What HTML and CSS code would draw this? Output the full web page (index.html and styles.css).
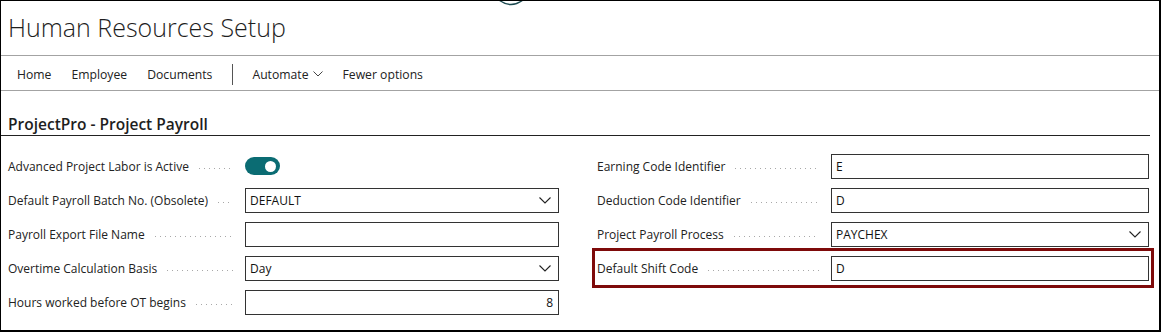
FILE: index.html
```html
<!DOCTYPE html>
<html>
<head>
<meta charset="utf-8">
<link rel="stylesheet" href="styles.css">
</head>
<body>
<div class="frame">
  <svg class="topdeco" width="30" height="8" viewBox="0 0 30 8"><path d="M3 0 Q15 9 27 0" fill="none" stroke="#1c4a50" stroke-width="1.4"/></svg>
  <header class="titlebar"><h1 class="title">Human Resources Setup</h1></header>
  <nav class="actions">
    <span class="act">Home</span>
    <span class="act">Employee</span>
    <span class="act">Documents</span>
    <span class="sep"></span>
    <span class="act">Automate <svg class="navchev" width="10" height="6" viewBox="0 0 10 6"><path d="M0.5 0.5 L5 5 L9.5 0.5" fill="none" stroke="#444" stroke-width="1"/></svg></span>
    <span class="act">Fewer options</span>
  </nav>
  <section class="group">
    <h2 class="group-title">ProjectPro - Project Payroll</h2>
    <div class="cols">
      <div class="col left">
        <div class="row"><span class="label">Advanced Project Labor is Active</span><span class="lead"></span><div class="ctl"><span class="toggle"><span class="knob"></span></span></div></div>
        <div class="row"><span class="label">Default Payroll Batch No. (Obsolete)</span><span class="lead"></span><div class="ctl"><div class="field sel"><span class="val">DEFAULT</span><svg class="chev" width="12" height="7" viewBox="0 0 12 7"><path d="M0.5 0.5 L6 6 L11.5 0.5" fill="none" stroke="#222" stroke-width="1.1"/></svg></div></div></div>
        <div class="row"><span class="label">Payroll Export File Name</span><span class="lead"></span><div class="ctl"><div class="field"></div></div></div>
        <div class="row"><span class="label">Overtime Calculation Basis</span><span class="lead"></span><div class="ctl"><div class="field sel"><span class="val plain">Day</span><svg class="chev" width="12" height="7" viewBox="0 0 12 7"><path d="M0.5 0.5 L6 6 L11.5 0.5" fill="none" stroke="#222" stroke-width="1.1"/></svg></div></div></div>
        <div class="row"><span class="label">Hours worked before OT begins</span><span class="lead"></span><div class="ctl"><div class="field num"><span class="val plain">8</span></div></div></div>
      </div>
      <div class="col right">
        <div class="row"><span class="label">Earning Code Identifier</span><span class="lead"></span><div class="ctl"><div class="field"><span class="val">E</span></div></div></div>
        <div class="row"><span class="label">Deduction Code Identifier</span><span class="lead"></span><div class="ctl"><div class="field"><span class="val">D</span></div></div></div>
        <div class="row"><span class="label">Project Payroll Process</span><span class="lead"></span><div class="ctl"><div class="field sel"><span class="val">PAYCHEX</span><svg class="chev" width="12" height="7" viewBox="0 0 12 7"><path d="M0.5 0.5 L6 6 L11.5 0.5" fill="none" stroke="#222" stroke-width="1.1"/></svg></div></div></div>
        <div class="row hl"><span class="label">Default Shift Code</span><span class="lead"></span><div class="ctl"><div class="field"><span class="val">D</span></div></div></div>
      </div>
    </div>
  </section>
</div>
</body>
</html>
```
FILE: styles.css
```css
* { box-sizing: border-box; }
html, body { margin: 0; padding: 0; background: #fff; }
body { font-family: "Open Sans", "Noto Sans", sans-serif; color: #212121; }
.frame {
  position: relative;
  width: 1161px;
  height: 332px;
  border: 1px solid #000;
  border-right-width: 2px;
  border-bottom-width: 2px;
  overflow: hidden;
}
.topdeco { position: absolute; left: 495px; top: -1px; }
.titlebar {
  height: 55px;
  border-bottom: 1px solid #a3a3a3;
  padding-left: 7px;
  display: flex;
  align-items: center;
}
.title {
  margin: 0;
  font-weight: 300;
  font-size: 25px;
  color: #1e1e1e;
  position: relative;
  top: -1px;
}
.actions {
  height: 35px;
  border-bottom: 1px solid #a3a3a3;
  display: flex;
  align-items: center;
  padding-left: 16px;
  padding-top: 2px;
  font-size: 12.2px;
  color: #222;
}
.act { margin-right: 20px; display: inline-flex; align-items: center; }
.navchev { margin-left: 4px; }
.sep { width: 1px; height: 21px; background: #555; margin: 0 19px 0 0; }
.group { padding: 0 9px 0 0; }
.group-title {
  margin: 0;
  font-size: 15.5px;
  font-weight: 600;
  color: #1e1e1e;
  height: 45px;
  padding: 24px 0 0 7px;
  line-height: 18px;
  border-bottom: 1px solid #222;
}
.cols { display: flex; padding-top: 13px; }
.col { display: flex; flex-direction: column; }
.col.left { width: 558px; padding-left: 7px; }
.col.right { width: 552px; margin-left: 38px; }
.row {
  display: flex;
  align-items: center;
  height: 34px;
  font-size: 12px;
  color: #222;
}
.label { white-space: nowrap; }
.lead {
  flex: 1;
  align-self: center;
  height: 1px;
  margin: 5px 12px 0 10px;
  background-image: linear-gradient(to right, #a8a8a8 1px, transparent 1px);
  background-size: 5px 1px;
  background-repeat: repeat-x;
}
.col.left .ctl { width: 314px; }
.col.right .ctl { width: 318px; }
.field {
  height: 25px;
  border: 1px solid #333;
  display: flex;
  align-items: center;
  padding: 0 6px 0 4px;
  font-size: 12px;
  color: #111;
}
.field.sel { justify-content: space-between; padding-right: 7px; }
.field.num { justify-content: flex-end; padding-right: 5px; }
.toggle {
  display: block;
  width: 35px;
  height: 18px;
  border-radius: 9px;
  background: #0b6c73;
  position: relative;
}
.knob {
  position: absolute;
  right: 4px;
  top: 3.5px;
  width: 11px;
  height: 11px;
  border-radius: 50%;
  background: #fff;
}
.row.hl {
  outline: 3px solid #7e0a0a;
  outline-offset: 0px;
  margin-left: -2px;
  padding-left: 2px;
  margin-right: -2px;
  padding-right: 2px;
}
```
